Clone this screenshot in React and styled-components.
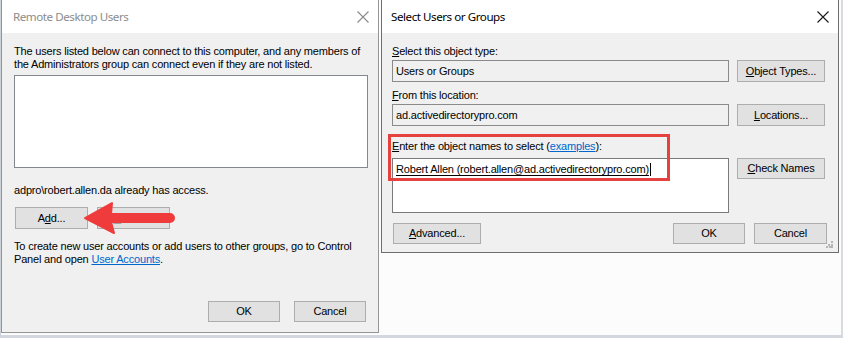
import React from "react";
import styled, { createGlobalStyle } from "styled-components";

const GlobalStyle = createGlobalStyle`
    html, body {
        margin: 0;
        padding: 0;
        background: #fcfcfc;
    }
    * {
        box-sizing: border-box;
    }
`

const Page = styled.div`
    width: 843px;
    height: 338px;
    display: flex;
    align-items: flex-start;
    background: #fcfcfc;
    border-left: 1px solid #cdd1d8;
    border-right: 2px solid #d8dbe1;
    border-bottom: 3px solid #d3d7de;
    font-family: "Liberation Sans", Arial, sans-serif;
    font-size: 11px;
    letter-spacing: -0.18px;
    color: #000;
`
const Dialog = styled.div`
    position: relative;
    display: flex;
    flex-direction: column;
    width: ${(props) => props.width}px;
    height: ${(props) => props.height}px;
    margin-left: ${(props) => props.offset || 0}px;
    border: 1px solid ${(props) => props.active ? '#6e6e6e' : '#959595'};
    border-top: none;
    background: #f0f0f0;
`
const TitleBar = styled.div`
    height: 33px;
    flex: none;
    display: flex;
    align-items: center;
    justify-content: space-between;
    padding: 0 9px 0 9px;
    background: #fff;
`
const Title = styled.span`
    font-family: "Noto Sans", "Open Sans", sans-serif;
    font-size: 11.6px;
    letter-spacing: -0.45px;
    color: ${(props) => props.active ? '#000' : '#8c8c8c'};
    margin-top: -1px;
`
const Body = styled.div`
    flex: 1;
    display: flex;
    flex-direction: column;
    padding: ${(props) => props.pad};
`
const Text = styled.div`
    line-height: 13px;
    margin-top: ${(props) => props.mt || 0}px;
    white-space: nowrap;
`
const U = styled.span`
    text-decoration: underline;
    text-underline-offset: 1px;
`
const Link = styled.span`
    color: #0066cc;
    text-decoration: underline;
    text-underline-offset: 1px;
`
const ListBox = styled.div`
    height: 93px;
    margin-top: 4px;
    margin-right: -2px;
    background: #fff;
    border: 1px solid #828790;
`
const Row = styled.div`
    display: flex;
    align-items: ${(props) => props.align || 'center'};
    justify-content: ${(props) => props.justify || 'flex-start'};
    gap: ${(props) => props.gap || 0}px;
    margin-top: ${(props) => props.mt || 0}px;
    margin-left: ${(props) => props.ml || 0}px;
`
const Spacer = styled.div`
    flex: 1;
`
const Button = styled.div`
    width: ${(props) => props.w}px;
    height: ${(props) => props.h || 21}px;
    flex: none;
    display: flex;
    align-items: center;
    justify-content: center;
    background: #e1e1e1;
    border: 1px solid #adadad;
    color: ${(props) => props.disabled ? '#a3a3a3' : '#000'};
    line-height: 1;
`
const Field = styled.div`
    width: 337px;
    height: ${(props) => props.h || 22}px;
    flex: none;
    padding: ${(props) => props.multi ? '4px 3px' : '0 3px'};
    display: flex;
    align-items: ${(props) => props.multi ? 'flex-start' : 'center'};
    background: ${(props) => props.multi ? '#fff' : '#f0f0f0'};
    border: 1px solid ${(props) => props.multi ? '#7a7a7a' : '#8a8a8a'};
    white-space: nowrap;
`
const Resolved = styled.span`
    text-decoration: underline;
    text-underline-offset: 2px;
    border-right: 1px solid #000;
    padding-right: 1px;
    line-height: 13px;
`
const Highlight = styled.div`
    position: absolute;
    left: 6px;
    top: 134px;
    width: 282px;
    height: 47px;
    border: 3px solid #e5423f;
    pointer-events: none;
`
const ArrowWrap = styled.svg`
    position: absolute;
    left: 79px;
    top: 199px;
`
const Grip = styled.svg`
    position: absolute;
    right: 5px;
    bottom: 4px;
`

function CloseIcon({ color }) {
    return (
        <svg width="12" height="12" viewBox="0 0 12 12">
            <path d="M0.5 0.5 L11.5 11.5 M11.5 0.5 L0.5 11.5" stroke={color} strokeWidth="1.1" />
        </svg>
    );
}

function RemoteDesktopUsers() {
    return (
        <Dialog width={378} height={333}>
            <TitleBar>
                <Title style={{ marginLeft: 2 }}>Remote Desktop Users</Title>
                <CloseIcon color="#8a8a8a" />
            </TitleBar>
            <Body pad="12px 12px 10px 12px">
                <Text>The users listed below can connect to this computer, and any members of<br />the Administrators group can connect even if they are not listed.</Text>
                <ListBox />
                <Text mt={16}>adpro\robert.allen.da already has access.</Text>
                <Row mt={10} ml={1} gap={9}>
                    <Button w={73} h={22}>A<U>d</U>d...</Button>
                    <Button w={73} h={22} disabled><U>R</U>emove</Button>
                </Row>
                <Text mt={11}>To create new user accounts or add users to other groups, go to Control<br />Panel and open <Link>User Accounts</Link>.</Text>
                <Spacer />
                <Row justify="flex-end" gap={14}>
                    <Button w={72}>OK</Button>
                    <Button w={72}>Cancel</Button>
                </Row>
            </Body>
            <ArrowWrap width="100" height="40" viewBox="0 0 100 40">
                <path
                    d="M4 19 L31 4 L30 15 L89 15 A4 4 0 0 1 89 23 L30 23 L33 34 Z"
                    fill="#ef3b3b"
                    stroke="#ef3b3b"
                    strokeWidth="2"
                    strokeLinejoin="round"
                />
            </ArrowWrap>
        </Dialog>
    );
}

function SelectUsers() {
    return (
        <Dialog width={458} height={253} offset={2} active>
            <TitleBar>
                <Title active>Select Users or Groups</Title>
                <CloseIcon color="#1a1a1a" />
            </TitleBar>
            <Body pad="12px 11px 9px 10px">
                <Text><U>S</U>elect this object type:</Text>
                <Row mt={2} gap={8}>
                    <Field>Users or Groups</Field>
                    <Button w={88} h={22}><U>O</U>bject Types...</Button>
                </Row>
                <Text mt={7}><U>F</U>rom this location:</Text>
                <Row mt={2} gap={8}>
                    <Field>ad.activedirectorypro.com</Field>
                    <Button w={88} h={22}><U>L</U>ocations...</Button>
                </Row>
                <Text mt={14}><U>E</U>nter the object names to select (<Link>examples</Link>):</Text>
                <Row mt={5} gap={8} align="flex-start">
                    <Field multi h={55}>
                        <Resolved>Robert Allen (robert.allen@ad.activedirectorypro.com)</Resolved>
                    </Field>
                    <Button w={88} h={21}><U>C</U>heck Names</Button>
                </Row>
                <Row mt={10} gap={9} ml={1}>
                    <Button w={88}><U>A</U>dvanced...</Button>
                    <Spacer />
                    <Button w={72}>OK</Button>
                    <Button w={73}>Cancel</Button>
                </Row>
            </Body>
            <Highlight />
            <Grip width="7" height="7" viewBox="0 0 7 7">
                <rect x="5" y="0" width="2" height="2" fill="#b5b5b5" />
                <rect x="2" y="3" width="2" height="2" fill="#b5b5b5" />
                <rect x="5" y="3" width="2" height="2" fill="#b5b5b5" />
                <rect x="0" y="5" width="2" height="2" fill="#b5b5b5" />
                <rect x="3" y="5" width="2" height="2" fill="#b5b5b5" />
                <rect x="5" y="5" width="2" height="2" fill="#b5b5b5" />
            </Grip>
        </Dialog>
    );
}

export default function App() {
    return (
        <>
            <GlobalStyle />
            <Page>
                <RemoteDesktopUsers />
                <SelectUsers />
            </Page>
        </>
    );
}
